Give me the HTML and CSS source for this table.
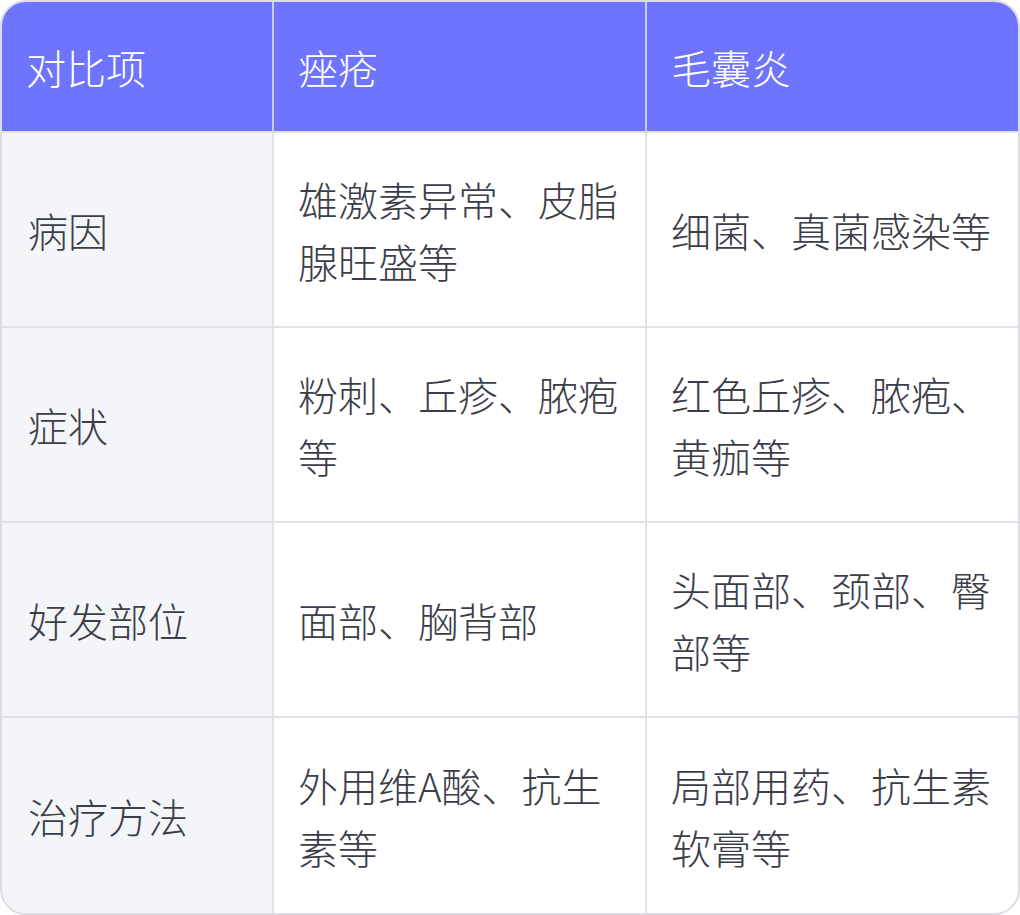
FILE: index.html
```html
<!DOCTYPE html>
<html lang="zh">
<head>
<meta charset="utf-8">
<link rel="stylesheet" href="styles.css">
</head>
<body>
<div class="table">
  <div class="cell head">对比项</div>
  <div class="cell head">痤疮</div>
  <div class="cell head last">毛囊炎</div>

  <div class="cell label">病因</div>
  <div class="cell">雄激素异常、皮脂腺旺盛等</div>
  <div class="cell last">细菌、真菌感染等</div>

  <div class="cell label">症状</div>
  <div class="cell">粉刺、丘疹、脓疱等</div>
  <div class="cell last">红色丘疹、脓疱、黄痂等</div>

  <div class="cell label">好发部位</div>
  <div class="cell">面部、胸背部</div>
  <div class="cell last">头面部、颈部、臀部等</div>

  <div class="cell label bottom">治疗方法</div>
  <div class="cell bottom">外用维A酸、抗生素等</div>
  <div class="cell last bottom">局部用药、抗生素软膏等</div>
</div>
</body>
</html>
```

FILE: styles.css
```css
html, body {
  margin: 0;
  padding: 0;
  background: #ffffff;
}

.table {
  width: 1020px;
  height: 915px;
  box-sizing: border-box;
  border: 2px solid #dcdde2;
  border-radius: 26px;
  overflow: hidden;
  display: grid;
  grid-template-columns: 272px 373px 371px;
  grid-template-rows: 131px 195px 195px 195px 195px;
  font-family: "Noto Sans CJK SC", "Noto Sans", sans-serif;
  font-size: 40px;
  font-weight: 300;
  line-height: 62px;
  color: #3b3e49;
}

.cell {
  box-sizing: border-box;
  display: flex;
  align-items: center;
  padding: 0 22px 0 24px;
  border-right: 2px solid #e1e2e6;
  border-bottom: 2px solid #e1e2e6;
  background: #ffffff;
}

.cell.last {
  border-right: none;
}

.cell.bottom {
  border-bottom: none;
}

.cell.head {
  background: #6f74ff;
  color: #ffffff;
  border-right-color: #c9cbff;
  border-bottom-color: #e1e2e6;
}

.cell.head.last {
  border-right: none;
}

.cell.label {
  background: #f4f5f9;
  padding-left: 26px;
}
```
